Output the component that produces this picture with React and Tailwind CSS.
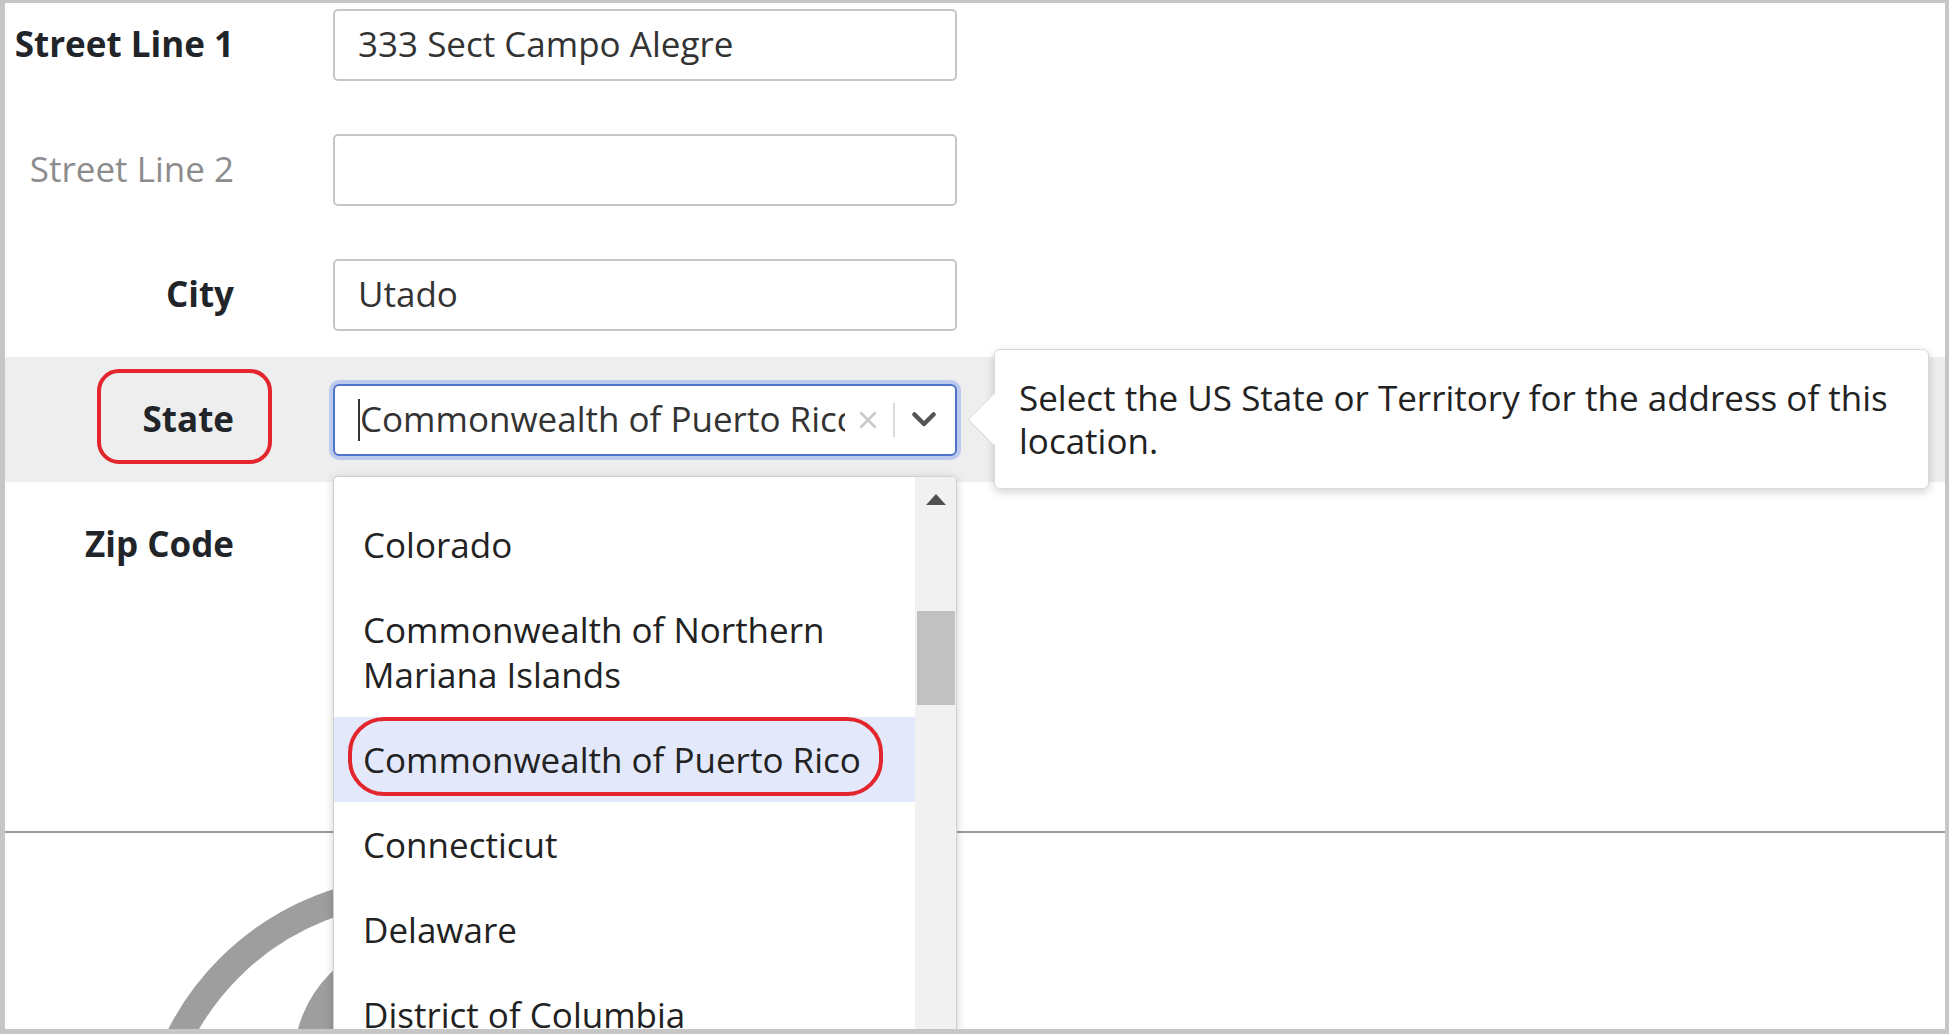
import React from 'react';

const OPTIONS = [
  { name: 'Colorado' },
  { name: 'Commonwealth of Northern Mariana Islands' },
  { name: 'Commonwealth of Puerto Rico', active: true },
  { name: 'Connecticut' },
  { name: 'Delaware' },
  { name: 'District of Columbia' },
  { name: 'Florida' },
];

function Label({ children, muted }) {
  return (
    <div
      className={`w-[229px] shrink-0 text-right ${
        muted ? 'text-[#8c8c8c] font-normal' : 'text-[#212529] font-bold'
      }`}
    >
      {children}
    </div>
  );
}

function TextInput({ value }) {
  return (
    <div className="ml-[99px] w-[624px] h-[72px] shrink-0 flex items-center px-[23px] bg-white border-2 border-[#c6c6c6] rounded-[5px] text-[#333]">
      {value}
    </div>
  );
}

function Row({ label, muted, children }) {
  return (
    <div className="h-[125px] flex items-center">
      <Label muted={muted}>{label}</Label>
      {children}
    </div>
  );
}

function StateSelect() {
  return (
    <div className="ml-[99px] w-[624px] h-[72px] shrink-0 flex items-center pl-[23px] bg-white border-2 border-[#5073cb] rounded-[6px] shadow-[0_0_0_4px_#bccaee] text-[#333]">
      <span className="w-[2px] h-[42px] bg-[#333] shrink-0" />
      <div className="w-[485px] overflow-hidden whitespace-nowrap">Commonwealth of Puerto Rico</div>
      <svg className="ml-[13px] shrink-0" width="20" height="20" viewBox="0 0 20 20">
        <path d="M3 3 L17 17 M17 3 L3 17" stroke="#c9c9c9" strokeWidth="2.5" strokeLinecap="round" />
      </svg>
      <span className="ml-[15px] w-[2px] h-[34px] bg-[#d9d9d9] shrink-0" />
      <svg className="ml-[17px] shrink-0" width="24" height="15" viewBox="0 0 24 15">
        <polyline points="2.5,2.5 12,12 21.5,2.5" fill="none" stroke="#555" strokeWidth="4.5" strokeLinecap="round" strokeLinejoin="round" />
      </svg>
    </div>
  );
}

function Tooltip() {
  return (
    <div className="absolute left-[989px] top-[-8px] w-[935px] h-[140px] bg-white border border-[#d9d9d9] rounded-[6px] shadow-[0_3px_10px_rgba(0,0,0,0.18)] px-[24px] pt-[26px] leading-[43px] text-[#222] z-20">
      <span className="absolute left-[-20px] top-[51px] w-[37px] h-[37px] bg-white border-l border-b border-[#d9d9d9] rotate-45" />
      Select the US State or Territory for the address of this location.
    </div>
  );
}

function Dropdown() {
  return (
    <div className="absolute left-[328px] top-[119px] w-[624px] h-[620px] bg-white border border-[#d0d0d0] rounded-t-[5px] shadow-[0_2px_10px_rgba(0,0,0,0.18)] overflow-hidden z-10">
      <div className="pr-[41px] pt-[25px] text-[#222]">
        {OPTIONS.map((o) => (
          <div
            key={o.name}
            className={`px-[29px] py-[20px] leading-[45px] ${o.active ? 'bg-[#e3e9fa]' : ''}`}
          >
            {o.name}
          </div>
        ))}
      </div>

      {/* scrollbar */}
      <div className="absolute right-0 top-0 bottom-0 w-[41px] bg-[#f1f1f1]">
        <svg className="mx-auto mt-[17px]" width="20" height="11" viewBox="0 0 20 11">
          <polygon points="10,0 20,11 0,11" fill="#505050" />
        </svg>
        <div className="absolute left-[2px] right-[1px] top-[134px] h-[94px] bg-[#c1c1c1]" />
      </div>

      <div className="absolute left-[14px] top-[240px] w-[535px] h-[79px] border-[4px] border-[#e3262e] rounded-[36px]" />
    </div>
  );
}

export default function App() {
  return (
    <div className="w-[1949px] h-[1034px] overflow-hidden bg-white border-solid border-[#c6c6c6] border-t-[3px] border-l-[5px] border-r-[4px] border-b-[5px] font-['Open_Sans',sans-serif] text-[35px]">
      <div className="-mt-[21px]">
        <Row label="Street Line 1">
          <TextInput value="333 Sect Campo Alegre" />
        </Row>
        <Row label="Street Line 2" muted>
          <TextInput value="" />
        </Row>
        <Row label="City">
          <TextInput value="Utado" />
        </Row>

        <div className="relative h-[125px] flex items-center bg-[#eeeeee]">
          <Label>State</Label>
          <div className="absolute left-[92px] top-[12px] w-[175px] h-[95px] border-[4px] border-[#e3262e] rounded-[22px]" />
          <StateSelect />
          <Tooltip />
          <Dropdown />
        </div>

        <Row label="Zip Code">
          <TextInput value="" />
        </Row>

        <div className="h-[224px]" />
        <div className="h-[2px] bg-[#9b9b9b]" />

        {/* user avatar placeholder, mostly hidden behind the dropdown */}
        <svg className="ml-[115px]" width="700" height="200" viewBox="0 0 700 200">
          <circle cx="298.5" cy="324" r="267.5" fill="none" stroke="#9e9e9e" strokeWidth="27" />
          <circle cx="298.5" cy="229" r="125" fill="#9e9e9e" />
        </svg>
      </div>
    </div>
  );
}
